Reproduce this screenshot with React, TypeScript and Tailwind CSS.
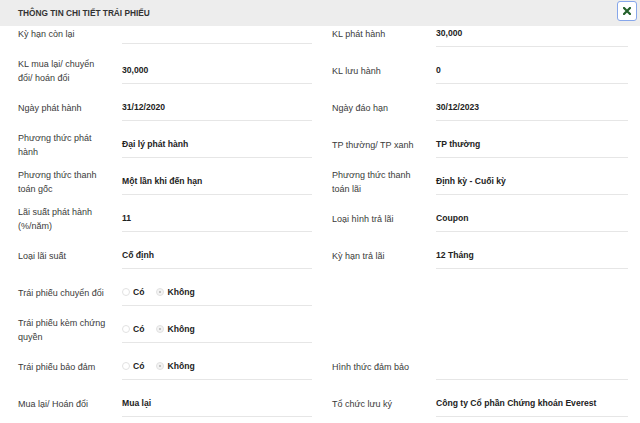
import { ReactNode } from 'react'

type Field = { label: string; value?: ReactNode }

function Radio({ checked, label }: { checked?: boolean; label: string }) {
  return (
    <span className="flex items-center gap-[3px]">
      <span
        className={`w-[8px] h-[8px] rounded-full border border-[#e2e2e2] flex items-center justify-center ${
          checked ? 'bg-[#f3f3f3]' : 'bg-white'
        }`}
      >
        {checked && <span className="w-[2px] h-[2px] rounded-full bg-[#b5b5b5]" />}
      </span>
      <span className="font-bold text-[#222]">{label}</span>
    </span>
  )
}

function YesNo() {
  return (
    <span className="flex items-center gap-[12px]">
      <Radio label="Có" />
      <Radio checked label="Không" />
    </span>
  )
}

const left: Field[] = [
  { label: 'Kỳ hạn còn lại' },
  { label: 'KL mua lại/ chuyển đổi/ hoán đổi', value: '30,000' },
  { label: 'Ngày phát hành', value: '31/12/2020' },
  { label: 'Phương thức phát hành', value: 'Đại lý phát hành' },
  { label: 'Phương thức thanh toán gốc', value: 'Một lần khi đến hạn' },
  { label: 'Lãi suất phát hành (%/năm)', value: '11' },
  { label: 'Loại lãi suất', value: 'Cố định' },
  { label: 'Trái phiếu chuyển đổi', value: <YesNo /> },
  { label: 'Trái phiếu kèm chứng quyền', value: <YesNo /> },
  { label: 'Trái phiếu bảo đảm', value: <YesNo /> },
  { label: 'Mua lại/ Hoán đổi', value: 'Mua lại' },
]

const right: (Field | null)[] = [
  { label: 'KL phát hành', value: '30,000' },
  { label: 'KL lưu hành', value: '0' },
  { label: 'Ngày đáo hạn', value: '30/12/2023' },
  { label: 'TP thường/ TP xanh', value: 'TP thường' },
  { label: 'Phương thức thanh toán lãi', value: 'Định kỳ - Cuối kỳ' },
  { label: 'Loại hình trả lãi', value: 'Coupon' },
  { label: 'Kỳ hạn trả lãi', value: '12 Tháng' },
  null,
  null,
  { label: 'Hình thức đảm bảo' },
  { label: 'Tổ chức lưu ký', value: 'Công ty Cổ phần Chứng khoán Everest' },
]

function Row({ field, first }: { field: Field | null; first?: boolean }) {
  if (!field) return <div className="h-[37px]" />
  const empty = field.value === undefined
  return (
    <div className="flex items-center pt-[10px] h-[37px]">
      <div className="w-[90px] mr-[14px] text-[9px] leading-[14px] text-[#3a3a3a]">{field.label}</div>
      <div
        className={`flex-1 flex items-center border-b border-[#e6e6e6] text-[8.6px] font-bold text-[#222] ${
          empty && first ? 'h-[24px] self-start' : 'h-[27px]'
        }`}
      >
        {field.value}
      </div>
    </div>
  )
}

export default function App() {
  return (
    <div className="w-[640px] h-[423px] bg-white overflow-hidden flex flex-col font-['Liberation_Sans',Arial,sans-serif]">
      <div className="h-[26px] shrink-0 bg-[#ededed] flex items-center justify-between pl-[18px] pr-[3px]">
        <span className="text-[8.3px] font-bold text-[#333]">THÔNG TIN CHI TIẾT TRÁI PHIẾU</span>
        <button className="w-[20px] h-[20px] -mt-[4px] rounded-[3px] border-[1.5px] border-[#86a6ea] bg-white flex items-center justify-center">
          <svg width="8" height="8" viewBox="0 0 8 8">
            <path d="M1 1L7 7M7 1L1 7" stroke="#23602a" strokeWidth="2.2" strokeLinecap="square" />
          </svg>
        </button>
      </div>
      <div className="flex-1 overflow-hidden">
        <div className="-mt-[16px] grid grid-cols-[294px_296px] gap-x-[20px] pl-[18px]">
          <div className="flex flex-col">
            {left.map((f, i) => (
              <Row key={i} field={f} first={i === 0} />
            ))}
          </div>
          <div className="flex flex-col">
            {right.map((f, i) => (
              <Row key={i} field={f} />
            ))}
          </div>
        </div>
      </div>
    </div>
  )
}
